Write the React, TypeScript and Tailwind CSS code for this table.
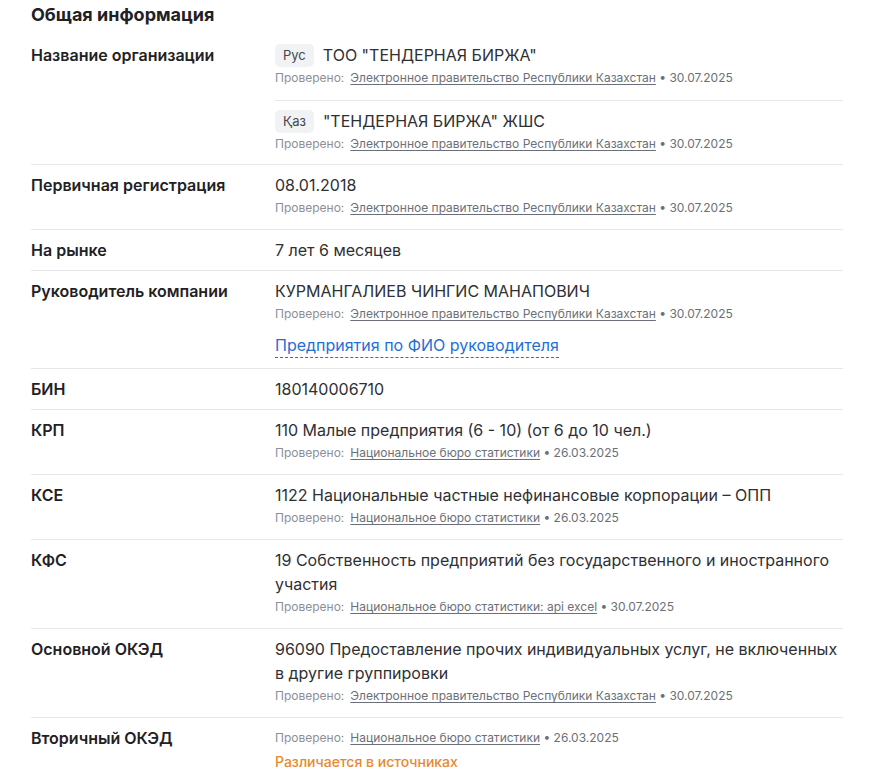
import React from "react";

type Src = { name: string; date: string };

const Verified = ({ src, className = "mt-px mb-[3px] leading-5" }: { src: Src; className?: string }) => (
  <div className={`text-[12px] text-[#8c9096] ${className}`}>
    <span>Проверено:</span>
    <span className="ml-[6px] text-[#6b7078] underline decoration-[#6b7078] underline-offset-2">{src.name}</span>
    <span className="text-[#6b7078]"> • {src.date}</span>
  </div>
);

const EGOV: Src = { name: "Электронное правительство Республики Казахстан", date: "30.07.2025" };
const STAT: Src = { name: "Национальное бюро статистики", date: "26.03.2025" };

const Row = ({ label, children, first = false }: { label: string; children: React.ReactNode; first?: boolean }) => (
  <div className={`flex ${first ? "" : "border-t border-[#e6e7e9]"}`}>
    <div className="w-[244px] shrink-0 py-2 text-[16px] font-semibold leading-6 text-[#1f2124]">{label}</div>
    <div className="flex-1">{children}</div>
  </div>
);

const Val = ({ children }: { children: React.ReactNode }) => (
  <div className="text-[16px] leading-6 text-[#2e3034]">{children}</div>
);

export default function App() {
  return (
    <div className="min-h-screen bg-white" style={{ fontFamily: "Inter, 'Noto Sans', sans-serif" }}>
      <div className="w-[812px] pl-[31px] box-content">
        <h2 className="pt-px text-[18px] font-bold leading-7 text-[#1f2124] mb-[6px]">Общая информация</h2>

        <Row label="Название организации" first>
          <div className="pt-2 pb-[9px]">
            <div className="flex items-center text-[16px] leading-6 text-[#2e3034]">
              <span className="mr-[9px] inline-flex h-[23px] items-center rounded-[5px] bg-[#f1f2f4] px-2 text-[13px] text-[#44474c]">Рус</span>
              ТОО "ТЕНДЕРНАЯ БИРЖА"
            </div>
            <Verified src={EGOV} />
          </div>
          <div className="border-t border-[#e6e7e9] pt-2 pb-[7px]">
            <div className="flex items-center text-[16px] leading-6 text-[#2e3034]">
              <span className="mr-[9px] inline-flex h-[23px] items-center rounded-[5px] bg-[#f1f2f4] px-2 text-[13px] text-[#44474c]">Қаз</span>
              "ТЕНДЕРНАЯ БИРЖА" ЖШС
            </div>
            <Verified src={EGOV} />
          </div>
        </Row>

        <Row label="Первичная регистрация">
          <div className="py-2">
            <Val>08.01.2018</Val>
            <Verified src={EGOV} />
          </div>
        </Row>

        <Row label="На рынке">
          <div className="py-2">
            <Val>7 лет 6 месяцев</Val>
          </div>
        </Row>

        <Row label="Руководитель компании">
          <div className="py-2">
            <Val>КУРМАНГАЛИЕВ ЧИНГИС МАНАПОВИЧ</Val>
            <Verified src={EGOV} />
            <div className="mt-[10px] mb-[2px] leading-none">
              <span className="inline-block border-b border-dashed border-[#2a6fd0] text-[16px] leading-[23px] text-[#1f6fd6]">
                Предприятия по ФИО руководителя
              </span>
            </div>
          </div>
        </Row>

        <Row label="БИН">
          <div className="py-2">
            <Val>180140006710</Val>
          </div>
        </Row>

        <Row label="КРП">
          <div className="py-2">
            <Val>110 Малые предприятия (6 - 10) (от 6 до 10 чел.)</Val>
            <Verified src={STAT} />
          </div>
        </Row>

        <Row label="КСЕ">
          <div className="py-2">
            <Val>1122 Национальные частные нефинансовые корпорации – ОПП</Val>
            <Verified src={STAT} />
          </div>
        </Row>

        <Row label="КФС">
          <div className="py-2">
            <Val>19 Собственность предприятий без государственного и иностранного участия</Val>
            <Verified src={{ name: "Национальное бюро статистики: api excel", date: "30.07.2025" }} />
          </div>
        </Row>

        <Row label="Основной ОКЭД">
          <div className="py-2">
            <Val>96090 Предоставление прочих индивидуальных услуг, не включенных в другие группировки</Val>
            <Verified src={EGOV} />
          </div>
        </Row>

        <Row label="Вторичный ОКЭД">
          <div className="py-2">
            <Verified src={STAT} className="leading-6" />
            <div className="text-[14px] font-medium leading-6 text-[#e8892e]">Различается в источниках</div>
          </div>
        </Row>
      </div>
    </div>
  );
}
